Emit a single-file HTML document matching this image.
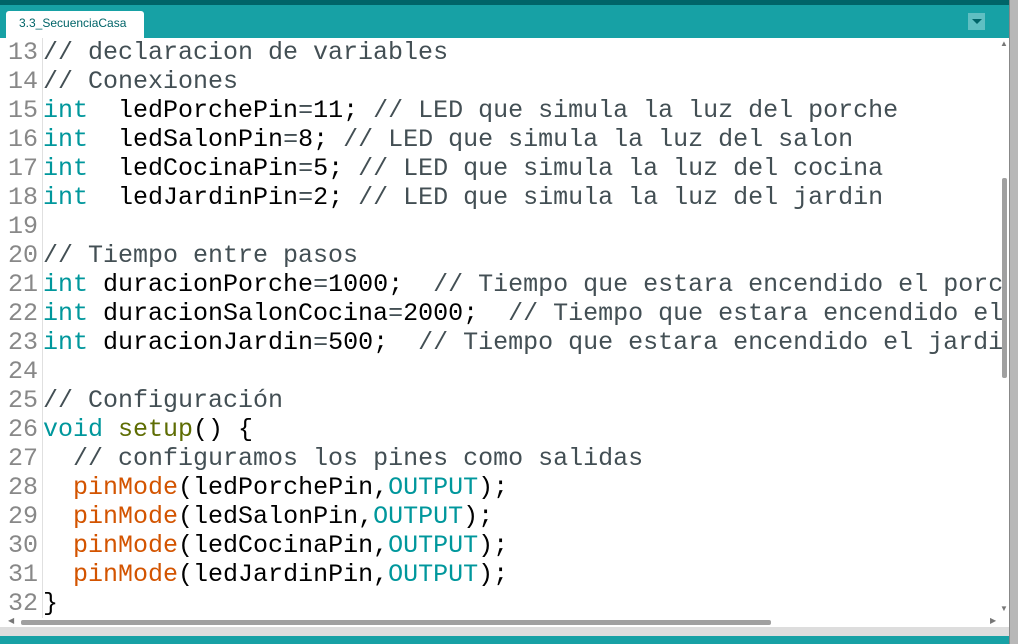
<!DOCTYPE html><html><head><style>
body{margin:0;width:1018px;height:644px;overflow:hidden;background:#fff;position:relative;font-family:"Liberation Sans",sans-serif}
.top{position:absolute;left:0;top:0;width:1009px;height:5px;background:#006468}
.bar{position:absolute;left:0;top:5px;width:1009px;height:33px;background:#17a1a5}
.tab{position:absolute;left:6px;top:11px;width:138px;height:27px;background:#fff;border-radius:3px 3px 0 0;color:#006468;font-size:12px;line-height:24px;text-indent:13px}
.dd{position:absolute;left:968px;top:13px;width:17px;height:17px;background:#5fbfc2}
.dd:after{content:"";position:absolute;left:4px;top:6px;border-left:5px solid transparent;border-right:5px solid transparent;border-top:5px solid #006468}
.side{position:absolute;left:1009px;top:0;width:9px;height:644px;background:#b8b8b8;border-left:1px solid #888}
.code{position:absolute;left:0;top:38px;font-family:"Liberation Mono",monospace;font-size:25px;line-height:29px;white-space:pre}
.g{position:absolute;left:42px;top:38px;width:1px;height:580px;background:#e0e0e0}
.ln{display:inline-block;width:38px;text-align:right;color:#888;margin-right:5px}
.c{color:#434f54}.k{color:#00979c}.f{color:#d35400}.s{color:#5e6d03}.o{color:#434f54}
.vs{position:absolute;left:1002px;top:178px;width:5px;height:200px;background:#a0a0a0;border-radius:2px}
.hs{position:absolute;left:21px;top:620px;width:750px;height:5px;background:#a0a0a0;border-radius:2px}
.gb{position:absolute;left:0;top:627px;width:1009px;height:9px;background:#ddd}
.tb{position:absolute;left:0;top:636px;width:1009px;height:8px;background:#17a1a5}
.ar{position:absolute;font-size:8px;color:#777}
</style></head><body>
<div class="code"><span class="ln">13</span><span class="c">// declaracion de variables</span>
<span class="ln">14</span><span class="c">// Conexiones</span>
<span class="ln">15</span><span class="k">int</span>  ledPorchePin<span class="o">=</span>11; <span class="c">// LED que simula la luz del porche</span>
<span class="ln">16</span><span class="k">int</span>  ledSalonPin<span class="o">=</span>8; <span class="c">// LED que simula la luz del salon</span>
<span class="ln">17</span><span class="k">int</span>  ledCocinaPin<span class="o">=</span>5; <span class="c">// LED que simula la luz del cocina</span>
<span class="ln">18</span><span class="k">int</span>  ledJardinPin<span class="o">=</span>2; <span class="c">// LED que simula la luz del jardin</span>
<span class="ln">19</span>
<span class="ln">20</span><span class="c">// Tiempo entre pasos</span>
<span class="ln">21</span><span class="k">int</span> duracionPorche<span class="o">=</span>1000;  <span class="c">// Tiempo que estara encendido el porc</span>
<span class="ln">22</span><span class="k">int</span> duracionSalonCocina<span class="o">=</span>2000;  <span class="c">// Tiempo que estara encendido el</span>
<span class="ln">23</span><span class="k">int</span> duracionJardin<span class="o">=</span>500;  <span class="c">// Tiempo que estara encendido el jardi</span>
<span class="ln">24</span>
<span class="ln">25</span><span class="c">// Configuración</span>
<span class="ln">26</span><span class="k">void</span> <span class="s">setup</span>() {
<span class="ln">27</span>  <span class="c">// configuramos los pines como salidas</span>
<span class="ln">28</span>  <span class="f">pinMode</span>(ledPorchePin,<span class="k">OUTPUT</span>);
<span class="ln">29</span>  <span class="f">pinMode</span>(ledSalonPin,<span class="k">OUTPUT</span>);
<span class="ln">30</span>  <span class="f">pinMode</span>(ledCocinaPin,<span class="k">OUTPUT</span>);
<span class="ln">31</span>  <span class="f">pinMode</span>(ledJardinPin,<span class="k">OUTPUT</span>);
<span class="ln">32</span>}</div>
<div class="g"></div>
<div class="top"></div><div class="bar"></div><div class="tab">3.3_SecuenciaCasa</div><div class="dd"></div>
<div class="ar" style="left:1000px;top:39px">▲</div><div class="ar" style="left:1000px;top:604px">▼</div>
<div class="ar" style="left:8px;top:616px">◀</div><div class="ar" style="left:990px;top:616px">▶</div>
<div class="vs"></div><div class="hs"></div><div class="gb"></div><div class="tb"></div><div class="side"></div>
</body></html>
